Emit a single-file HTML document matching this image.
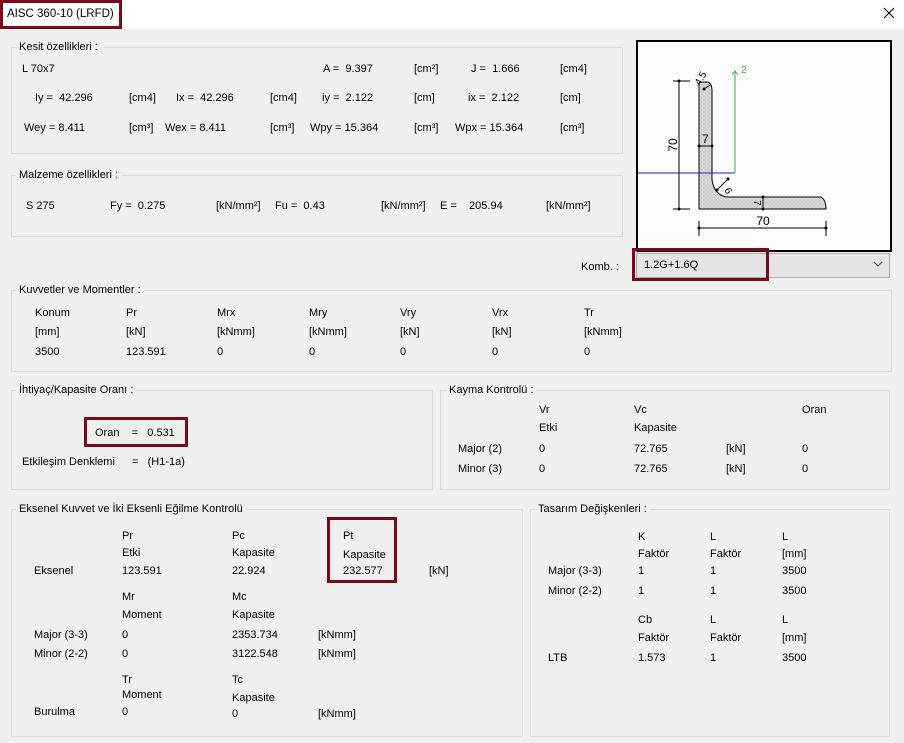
<!DOCTYPE html><html><head><meta charset="utf-8"><style>
body{margin:0;width:904px;height:743px;background:#f0f0f0;position:relative;overflow:hidden;font-family:"Liberation Sans",sans-serif;font-size:11px;color:#000}
div{position:absolute}
.t{line-height:14px;white-space:nowrap}
.g{border:1px solid #dcdcdc;}
.gl{background:#f0f0f0;padding:0 3px;line-height:14px;white-space:nowrap}
.r{border:3px solid #7a0a1a}
</style></head><body>
<div style="left:0;top:0;width:904px;height:29px;background:#fff"></div>
<div class="t" style="left:7px;top:7px;font-size:11.5px">AISC 360-10 (LRFD)</div>
<div class="r" style="left:0;top:0;width:116px;height:23px"></div>
<svg style="position:absolute;left:883px;top:7px" width="12" height="12"><path d="M1 1L11 11M11 1L1 11" stroke="#000" stroke-width="1.1"/></svg>

<!-- Kesit -->
<div class="g" style="left:11px;top:47px;width:610px;height:105px"></div>
<div class="gl" style="left:16px;top:40px">Kesit özellikleri :</div>
<div class="t" style="left:22px;top:62px">L 70x7</div>
<div class="t" style="left:323px;top:62px">A =&nbsp; 9.397</div>
<div class="t" style="left:414px;top:62px">[cm²]</div>
<div class="t" style="left:471px;top:62px">J =&nbsp; 1.666</div>
<div class="t" style="left:560px;top:62px">[cm4]</div>
<div class="t" style="left:35px;top:91px">Iy =&nbsp; 42.296</div>
<div class="t" style="left:129px;top:91px">[cm4]</div>
<div class="t" style="left:176px;top:91px">Ix =&nbsp; 42.296</div>
<div class="t" style="left:270px;top:91px">[cm4]</div>
<div class="t" style="left:322px;top:91px">iy =&nbsp; 2.122</div>
<div class="t" style="left:414px;top:91px">[cm]</div>
<div class="t" style="left:468px;top:91px">ix =&nbsp; 2.122</div>
<div class="t" style="left:560px;top:91px">[cm]</div>
<div class="t" style="left:24px;top:121px">Wey = 8.411</div>
<div class="t" style="left:129px;top:121px">[cm³]</div>
<div class="t" style="left:165px;top:121px">Wex = 8.411</div>
<div class="t" style="left:270px;top:121px">[cm³]</div>
<div class="t" style="left:310px;top:121px">Wpy = 15.364</div>
<div class="t" style="left:414px;top:121px">[cm³]</div>
<div class="t" style="left:455px;top:121px">Wpx = 15.364</div>
<div class="t" style="left:560px;top:121px">[cm³]</div>

<!-- Malzeme -->
<div class="g" style="left:11px;top:175px;width:610px;height:60px"></div>
<div class="gl" style="left:16px;top:168px">Malzeme özellikleri :</div>
<div class="t" style="left:26px;top:199px">S 275</div>
<div class="t" style="left:110px;top:199px">Fy =&nbsp; 0.275</div>
<div class="t" style="left:216px;top:199px">[kN/mm²]</div>
<div class="t" style="left:275px;top:199px">Fu =&nbsp; 0.43</div>
<div class="t" style="left:381px;top:199px">[kN/mm²]</div>
<div class="t" style="left:440px;top:199px">E =&nbsp;&nbsp;&nbsp; 205.94</div>
<div class="t" style="left:546px;top:199px">[kN/mm²]</div>

<!-- drawing -->
<div style="left:636px;top:40px;width:252px;height:208px;border:2px solid #000;background:#fcfcfc"></div>
<svg style="position:absolute;left:0;top:0" width="904" height="743">
<defs><pattern id="h" width="4" height="4" patternUnits="userSpaceOnUse"><rect width="4" height="4" fill="#dedede"/><path d="M0 0L4 4M4 0L0 4" stroke="#c4c4c4" stroke-width="0.7"/></pattern></defs>
<path d="M699 84Q699 82 702 82L708 82Q712 84 712 90L712 180Q714 194 726 197L821 197Q826 200 826 209L699 209Z" fill="url(#h)" stroke="#000" stroke-width="1"/>
<line x1="638" y1="173" x2="735" y2="173" stroke="#2020c0"/>
<line x1="735" y1="173" x2="735" y2="72" stroke="#40b040"/>
<path d="M732 75L735 71L738 75" fill="none" stroke="#40b040"/>
<text x="741" y="73" fill="#40b040" font-size="10" font-family="Liberation Sans">2</text>
<line x1="679" y1="81" x2="679" y2="209" stroke="#000"/><line x1="673" y1="81" x2="690" y2="81" stroke="#000"/><line x1="673" y1="209" x2="690" y2="209" stroke="#000"/>
<circle cx="679" cy="81" r="1.5"/><circle cx="679" cy="209" r="1.5"/>
<text x="0" y="0" transform="translate(677,145) rotate(-90)" font-size="12" font-family="Liberation Sans" text-anchor="middle">70</text>
<line x1="699" y1="228" x2="826" y2="228" stroke="#000"/><line x1="699" y1="221" x2="699" y2="236" stroke="#000"/><line x1="826" y1="221" x2="826" y2="236" stroke="#000"/>
<circle cx="699" cy="228" r="1.5"/><circle cx="826" cy="228" r="1.5"/>
<text x="763" y="225" font-size="12" font-family="Liberation Sans" text-anchor="middle">70</text>
<line x1="699" y1="146" x2="712" y2="146" stroke="#000"/><circle cx="699" cy="146" r="1.5"/><circle cx="712" cy="146" r="1.5"/>
<text x="702" y="143" font-size="12" font-family="Liberation Sans">7</text>
<line x1="763" y1="197" x2="763" y2="209" stroke="#000"/><circle cx="763" cy="197" r="1.5"/><circle cx="763" cy="209" r="1.5"/>
<text x="0" y="0" transform="translate(754,200) rotate(90)" font-size="10" font-family="Liberation Sans">7</text>
<line x1="717" y1="190" x2="728" y2="179" stroke="#000"/><circle cx="717" cy="190" r="1.5"/><circle cx="728" cy="179" r="1.5"/>
<text x="0" y="0" transform="translate(724,190) rotate(60)" font-size="10" font-family="Liberation Sans">6</text>
<line x1="704" y1="89" x2="710" y2="85" stroke="#000"/><circle cx="704" cy="89" r="1.5"/>
<text x="0" y="0" transform="translate(700,86) rotate(-60)" font-size="10" font-family="Liberation Sans">4.5</text>
</svg>

<!-- combo -->
<div class="t" style="left:581px;top:260px">Komb. :</div>
<div style="left:636px;top:253px;width:252px;height:23px;border:1px solid #adadad;background:#e5e5e5"></div>
<div class="t" style="left:644px;top:258px">1.2G+1.6Q</div>
<svg style="position:absolute;left:873px;top:260px" width="12" height="8"><path d="M1 2L5 6L9 2" fill="none" stroke="#555"/></svg>
<div class="r" style="left:632px;top:248px;width:131px;height:27px"></div>

<!-- Kuvvetler -->
<div class="g" style="left:11px;top:290px;width:879px;height:80px"></div>
<div class="gl" style="left:16px;top:283px">Kuvvetler ve Momentler :</div>
<div class="t" style="left:35px;top:306px">Konum</div><div class="t" style="left:35px;top:325px">[mm]</div><div class="t" style="left:35px;top:345px">3500</div>
<div class="t" style="left:126px;top:306px">Pr</div><div class="t" style="left:126px;top:325px">[kN]</div><div class="t" style="left:126px;top:345px">123.591</div>
<div class="t" style="left:217px;top:306px">Mrx</div><div class="t" style="left:217px;top:325px">[kNmm]</div><div class="t" style="left:217px;top:345px">0</div>
<div class="t" style="left:309px;top:306px">Mry</div><div class="t" style="left:309px;top:325px">[kNmm]</div><div class="t" style="left:309px;top:345px">0</div>
<div class="t" style="left:400px;top:306px">Vry</div><div class="t" style="left:400px;top:325px">[kN]</div><div class="t" style="left:400px;top:345px">0</div>
<div class="t" style="left:492px;top:306px">Vrx</div><div class="t" style="left:492px;top:325px">[kN]</div><div class="t" style="left:492px;top:345px">0</div>
<div class="t" style="left:584px;top:306px">Tr</div><div class="t" style="left:584px;top:325px">[kNmm]</div><div class="t" style="left:584px;top:345px">0</div>

<!-- Ihtiyac -->
<div class="g" style="left:11px;top:390px;width:420px;height:98px"></div>
<div class="gl" style="left:16px;top:383px">İhtiyaç/Kapasite Oranı :</div>
<div class="t" style="left:95px;top:426px">Oran&nbsp;&nbsp;&nbsp; =&nbsp;&nbsp; 0.531</div>
<div class="r" style="left:84px;top:417px;width:98px;height:24px"></div>
<div class="t" style="left:22px;top:455px">Etkileşim Denklemi</div>
<div class="t" style="left:132px;top:455px">=&nbsp;&nbsp; (H1-1a)</div>

<!-- Kayma -->
<div class="g" style="left:440px;top:390px;width:448px;height:98px"></div>
<div class="gl" style="left:446px;top:383px">Kayma Kontrolü :</div>
<div class="t" style="left:539px;top:403px">Vr</div><div class="t" style="left:634px;top:403px">Vc</div><div class="t" style="left:802px;top:403px">Oran</div>
<div class="t" style="left:539px;top:421px">Etki</div><div class="t" style="left:634px;top:421px">Kapasite</div>
<div class="t" style="left:458px;top:442px">Major (2)</div><div class="t" style="left:539px;top:442px">0</div><div class="t" style="left:634px;top:442px">72.765</div><div class="t" style="left:726px;top:442px">[kN]</div><div class="t" style="left:802px;top:442px">0</div>
<div class="t" style="left:458px;top:462px">Minor (3)</div><div class="t" style="left:539px;top:462px">0</div><div class="t" style="left:634px;top:462px">72.765</div><div class="t" style="left:726px;top:462px">[kN]</div><div class="t" style="left:802px;top:462px">0</div>

<!-- Eksenel -->
<div class="g" style="left:11px;top:509px;width:510px;height:226px"></div>
<div class="gl" style="left:16px;top:502px">Eksenel Kuvvet ve İki Eksenli Eğilme Kontrolü</div>
<div class="t" style="left:122px;top:529px">Pr</div><div class="t" style="left:232px;top:529px">Pc</div><div class="t" style="left:343px;top:529px">Pt</div>
<div class="t" style="left:122px;top:546px">Etki</div><div class="t" style="left:232px;top:546px">Kapasite</div><div class="t" style="left:343px;top:548px">Kapasite</div>
<div class="t" style="left:34px;top:564px">Eksenel</div><div class="t" style="left:122px;top:564px">123.591</div><div class="t" style="left:232px;top:564px">22.924</div><div class="t" style="left:343px;top:564px">232.577</div><div class="t" style="left:429px;top:564px">[kN]</div>
<div class="r" style="left:327px;top:517px;width:64px;height:60px"></div>
<div class="t" style="left:122px;top:590px">Mr</div><div class="t" style="left:232px;top:590px">Mc</div>
<div class="t" style="left:122px;top:608px">Moment</div><div class="t" style="left:232px;top:608px">Kapasite</div>
<div class="t" style="left:34px;top:628px">Major (3-3)</div><div class="t" style="left:122px;top:628px">0</div><div class="t" style="left:232px;top:628px">2353.734</div><div class="t" style="left:318px;top:628px">[kNmm]</div>
<div class="t" style="left:34px;top:647px">Minor (2-2)</div><div class="t" style="left:122px;top:647px">0</div><div class="t" style="left:232px;top:647px">3122.548</div><div class="t" style="left:318px;top:647px">[kNmm]</div>
<div class="t" style="left:122px;top:673px">Tr</div><div class="t" style="left:232px;top:673px">Tc</div>
<div class="t" style="left:122px;top:688px">Moment</div><div class="t" style="left:232px;top:691px">Kapasite</div>
<div class="t" style="left:34px;top:705px">Burulma</div><div class="t" style="left:122px;top:705px">0</div><div class="t" style="left:232px;top:707px">0</div><div class="t" style="left:318px;top:707px">[kNmm]</div>

<!-- Tasarim -->
<div class="g" style="left:530px;top:509px;width:358px;height:226px"></div>
<div class="gl" style="left:535px;top:502px">Tasarım Değişkenleri :</div>
<div class="t" style="left:638px;top:530px">K</div><div class="t" style="left:710px;top:530px">L</div><div class="t" style="left:782px;top:530px">L</div>
<div class="t" style="left:638px;top:547px">Faktör</div><div class="t" style="left:710px;top:547px">Faktör</div><div class="t" style="left:782px;top:547px">[mm]</div>
<div class="t" style="left:548px;top:564px">Major (3-3)</div><div class="t" style="left:638px;top:564px">1</div><div class="t" style="left:710px;top:564px">1</div><div class="t" style="left:782px;top:564px">3500</div>
<div class="t" style="left:548px;top:584px">Minor (2-2)</div><div class="t" style="left:638px;top:584px">1</div><div class="t" style="left:710px;top:584px">1</div><div class="t" style="left:782px;top:584px">3500</div>
<div class="t" style="left:638px;top:613px">Cb</div><div class="t" style="left:710px;top:613px">L</div><div class="t" style="left:782px;top:613px">L</div>
<div class="t" style="left:638px;top:631px">Faktör</div><div class="t" style="left:710px;top:631px">Faktör</div><div class="t" style="left:782px;top:631px">[mm]</div>
<div class="t" style="left:548px;top:651px">LTB</div><div class="t" style="left:638px;top:651px">1.573</div><div class="t" style="left:710px;top:651px">1</div><div class="t" style="left:782px;top:651px">3500</div>
</body></html>
